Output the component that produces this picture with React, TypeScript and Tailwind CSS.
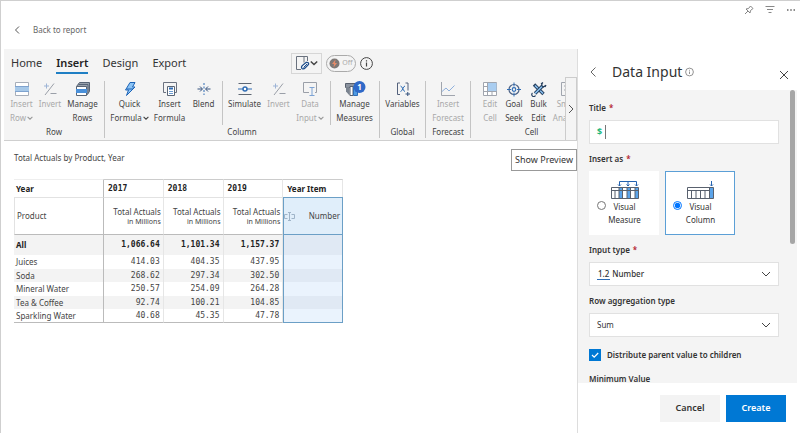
import type { ReactNode } from "react";

const SLATE = "#596575";
const BLUE = "#2f6db5";
const SKY = "#a9cdf0";

const Svg = ({ children, w = 16, h = 16 }: { children: ReactNode; w?: number; h?: number }) => (
  <svg width={w} height={h} viewBox={`0 0 ${w} ${h}`} fill="none" className="shrink-0" aria-hidden="true">
    {children}
  </svg>
);

const Chevron = ({ size = 6, color = "#444" }: { size?: number; color?: string }) => (
  <svg width={size} height={size} viewBox="0 0 10 10" fill="none" className="pointer-events-none inline shrink-0" aria-hidden="true">
    <path d="M1 3l4 4 4-4" stroke={color} strokeWidth={size > 8 ? 1 : 1.8} />
  </svg>
);

const InsertRowIcon = () => (
  <Svg>
    <path d="M1.500 1.500h13v13h-13z" fill="#fff" stroke="#a7aeb9" />
    <path d="M1 5.500h14v5H1z" fill="#a6c8e8" />
    <path d="M1 5.500h14M1 10.500h14" stroke="#7fa3cf" />
  </Svg>
);

const InvertIcon = () => (
  <Svg>
    <path d="M2 5h5M4.500 2.500v5" stroke="#9db4d6" />
    <path d="M3 14L12 2.500M8.500 12.500h6" stroke="#9a9fa8" />
  </Svg>
);

const ManageRowsIcon = () => (
  <Svg>
    <path d="M1.500 5.500l3-4h10v9l-3 4" fill="#9aa2ad" stroke={SLATE} />
    <path d="M3.500 3.500h9.500v9" stroke={SLATE} />
    <path d="M1.500 5.500h10v9h-10z" fill="#fff" stroke={SLATE} />
    <path d="M1 8h11v4H1z" fill="#4a90d9" />
  </Svg>
);

const BoltIcon = () => (
  <Svg>
    <path d="M8 1.500h5L10.500 6H13l-8.500 8.500L6.500 9H3.500z" fill="#8cc4f5" stroke="#1c63b7" strokeLinejoin="round" />
    <path d="M5 8h6" stroke="#1c63b7" />
  </Svg>
);

const InsertFormulaIcon = () => (
  <Svg>
    <path d="M4 11.500H1.500v-10h13v10H13" stroke="#6b7280" />
    <path d="M5.500 5.500h7v9h-7z" fill="#fff" stroke={SLATE} />
    <path d="M7 7.500h4" stroke={BLUE} strokeWidth="2" />
    <path d="M7 10.500h4M7 12.500h4" stroke="#6b9bd1" />
  </Svg>
);

const BlendIcon = () => (
  <Svg>
    <path d="M8 2v12" stroke={BLUE} strokeDasharray="2 1.500" />
    <path d="M1.500 8H6M4 5.500L6.500 8 4 10.500M14.500 8H10M12 5.500L9.500 8l2.500 2.500" stroke="#33507c" />
  </Svg>
);

const SimulateIcon = () => (
  <Svg>
    <path d="M1.500 2.500h13M1.500 13.500h13" stroke="#5d6673" />
    <path d="M1 8h14" stroke={BLUE} />
    <circle cx="8" cy="8" r="2" fill="#fff" stroke={BLUE} strokeWidth="1.500" />
  </Svg>
);

const DataInputIcon = () => (
  <Svg>
    <path d="M7 11.500H1.500v-10h13v10H13" stroke="#9a9fa8" />
    <path d="M7.500 6.500h5M10 6.500v8M7.500 14.500h5" stroke="#7da3d4" />
  </Svg>
);

const MeasuresIcon = () => (
  <svg width="22" height="16" viewBox="0 0 22 16" fill="none" className="shrink-0" aria-hidden="true">
    <path d="M1.500 2.500h12v4h-12z" fill="#8b939f" stroke="#59616e" />
    <path d="M2 6h3.500v8.500l-3.500-4z" fill="#7a838f" />
    <path d="M6 5.500h3v9H6z" fill="#fff" stroke="#59616e" />
    <path d="M9.500 5.500h4v9h-4z" fill="#4f9be3" stroke={BLUE} />
    <circle cx="15.500" cy="6" r="6" fill="#2f69c8" />
    <text x="15.500" y="9" fill="#fff" fontSize="8" fontWeight="700" textAnchor="middle">1</text>
  </svg>
);

const VariablesIcon = () => (
  <Svg>
    <path d="M5 2H2.500v11.500H5M10.500 2H13v7.500" stroke="#53617c" />
    <path d="M5.500 5c2 0 2.500 5.500 4.500 5.500M10 5c-2 0-2.500 5.500-4.500 5.500" stroke={BLUE} />
    <path d="M10.500 13h4.500M12.750 11v4" stroke="#33507c" />
  </Svg>
);

const ForecastIcon = () => (
  <Svg>
    <path d="M1.500 1v13.500H15" stroke="#a0a5ae" />
    <path d="M2 10.500l4-3.500 3 3 5.500-5.500" stroke="#8fb0dc" />
  </Svg>
);

const EditCellIcon = () => (
  <Svg>
    <path d="M1.500 1.500h13v13h-13z" fill="#fff" stroke="#a0a5ae" />
    <path d="M6 2h8.500v8H6z" fill={SKY} />
    <path d="M5.500 1.500v13M1.500 10.500h13M1.500 5.500h4M10 10.500v4" stroke="#a0a5ae" />
  </Svg>
);

const GoalIcon = () => (
  <Svg>
    <circle cx="8" cy="8.500" r="5" stroke="#4c6286" strokeWidth="1.200" />
    <circle cx="8" cy="8.500" r="1.800" stroke={BLUE} strokeWidth="1.200" />
    <path d="M8 1.500v4M8 11.500v4M1 8.500h4M11 8.500h4" stroke={BLUE} />
  </Svg>
);

const BulkIcon = () => (
  <Svg>
    <path d="M3 3.500l9.500 9.500" stroke="#27405f" strokeWidth="3.400" />
    <path d="M4 4.500l8 8" stroke="#8cc4f5" strokeWidth="1.400" />
    <path d="M11.500 5L4 12.500" stroke="#27405f" strokeWidth="3.400" />
    <path d="M11.500 5L4 12.500" stroke="#8cc4f5" strokeWidth="1.400" />
    <path d="M14.500 4.500l-2 1.500-2-1.500 1-3M1.500 12a2 2 0 1 0 3 2.500M10 3l2-1.500M14 6l1-2" stroke="#27405f" strokeWidth="1.200" />
  </Svg>
);

const SmartIcon = () => (
  <Svg>
    <path d="M1.500 1.500h13v13h-13zM4 5h6M4 9h6" stroke="#a0a5ae" />
  </Svg>
);

type Tool = {
  top: string;
  bottom?: string;
  icon: ReactNode;
  width: string;
  disabled?: boolean;
  menu?: boolean;
};

const ToolButton = ({ top, bottom, icon, width, disabled, menu }: Tool) => (
  <button
    type="button"
    disabled={disabled}
    className={`flex shrink-0 flex-col items-center whitespace-nowrap leading-[14px] ${width} ${disabled ? "text-[#a9a9a9]" : "text-[#444]"}`}
  >
    {icon}
    <span>{top}</span>
    {bottom && (
      <span className="flex items-center gap-px">
        {bottom}
        {menu && <Chevron color={disabled ? "#999" : "#444"} />}
      </span>
    )}
  </button>
);

const ToolGroup = ({ label, sections, width }: { label: string; sections: Tool[][]; width: string }) => (
  <div className={`flex shrink-0 flex-col border-r border-[#c4c4c4] ${width}`}>
    <div className="flex h-[45px] justify-center">
      {sections.map((tools, i) => (
        <div key={i} className={`flex px-[3px] ${i > 0 ? "border-l border-[#c4c4c4]" : ""}`}>
          {tools.map((tool) => (
            <ToolButton key={tool.top + tool.bottom} {...tool} />
          ))}
        </div>
      ))}
    </div>
    <div className="text-center leading-[13px] text-[#444]">{label}</div>
  </div>
);

const groups: { label: string; width: string; sections: Tool[][] }[] = [
  {
    label: "Row",
    width: "w-[101px]",
    sections: [
      [
        { top: "Insert", bottom: "Row", icon: <InsertRowIcon />, width: "w-[29px]", disabled: true, menu: true },
        { top: "Invert", icon: <InvertIcon />, width: "w-[28px]", disabled: true },
        { top: "Manage", bottom: "Rows", icon: <ManageRowsIcon />, width: "w-[37px]" },
      ],
    ],
  },
  {
    label: "Column",
    width: "w-[275px]",
    sections: [
      [
        { top: "Quick", bottom: "Formula", icon: <BoltIcon />, width: "w-[42px]", menu: true },
        { top: "Insert", bottom: "Formula", icon: <InsertFormulaIcon />, width: "w-[38px]" },
        { top: "Blend", icon: <BlendIcon />, width: "w-[30px]" },
      ],
      [
        { top: "Simulate", icon: <SimulateIcon />, width: "w-[38px]" },
        { top: "Invert", icon: <InvertIcon />, width: "w-[30px]", disabled: true },
        { top: "Data", bottom: "Input", icon: <DataInputIcon />, width: "w-[33px]", disabled: true, menu: true },
      ],
      [{ top: "Manage", bottom: "Measures", icon: <MeasuresIcon />, width: "w-[42px]" }],
    ],
  },
  {
    label: "Global",
    width: "w-[46px]",
    sections: [[{ top: "Variables", icon: <VariablesIcon />, width: "w-[38px]" }]],
  },
  {
    label: "Forecast",
    width: "w-[45px]",
    sections: [[{ top: "Insert", bottom: "Forecast", icon: <ForecastIcon />, width: "w-[38px]", disabled: true }]],
  },
  {
    label: "Cell",
    width: "w-[122px]",
    sections: [
      [
        { top: "Edit", bottom: "Cell", icon: <EditCellIcon />, width: "w-[24px]", disabled: true },
        { top: "Goal", bottom: "Seek", icon: <GoalIcon />, width: "w-[24px]" },
        { top: "Bulk", bottom: "Edit", icon: <BulkIcon />, width: "w-[25px]" },
        { top: "Smart", bottom: "Analysis", icon: <SmartIcon />, width: "w-[34px]", disabled: true },
      ],
    ],
  },
];

const Ribbon = () => (
  <div className="ml-[3px] border-b border-[#cfcfcf] bg-[#f4f4f4]">
    <div className="flex h-7 items-center pl-[7px] text-[#333]">
      <nav className="flex gap-3.5 text-[11px] leading-[18px]">
        {["Home", "Insert", "Design", "Export"].map((tab) => (
          <a
            key={tab}
            href={`#${tab.toLowerCase()}`}
            className={`border-b-2 pt-0.5 ${tab === "Insert" ? "border-[#1f7fc4] font-semibold text-[#222]" : "border-transparent"}`}
          >
            {tab}
          </a>
        ))}
      </nav>
      <div className="ml-[105px] flex items-center gap-1">
        <button type="button" aria-label="Format" className="flex h-[21px] w-[31px] items-center justify-center border border-[#d6d6d6]">
          <Svg w={15}>
            <path d="M6 14.500H1.500v-13h11V6M9 1.500v6" stroke="#6a727e" />
            <path d="M7 13.500c-1-1-.5-2.500 1-3.500l3-2.500c2-.5 3 .5 2.500 2l-3 3c-1 1.200-2.500 1.700-3.500 1z" fill="#fff" stroke="#1f4e8c" strokeWidth="1.300" />
            <path d="M8.500 12.500l3.500-3.500" stroke="#1f4e8c" />
          </Svg>
          <Chevron size={8} />
        </button>
        <button type="button" role="switch" aria-checked="false" className="flex h-[17px] w-[30px] items-center gap-0.5 rounded-full border border-[#aaa] pl-0.5 text-[7px] text-[#aaa]">
          <Svg w={11} h={11}>
            <circle cx="5.500" cy="5.500" r="5" fill="#7d7876" />
            <path d="M6.500 1.500L3 6h2L4.500 9.500l3.500-4.500H6z" fill="#e58a68" />
          </Svg>
          Off
        </button>
        <button type="button" aria-label="Info">
          <Svg w={13} h={13}>
            <circle cx="6.500" cy="6.500" r="5.900" stroke="#444" />
            <path d="M6.500 5.500v4M6.500 3.200v1.200" stroke="#444" strokeWidth="1.200" />
          </Svg>
        </button>
      </div>
    </div>
    <div className="flex h-[63px] text-[8px]">
      <div className="flex min-w-0 flex-1 overflow-hidden pb-0.5 pt-1">
        {groups.map((group) => (
          <ToolGroup key={group.label} {...group} />
        ))}
      </div>
      <button type="button" aria-label="Scroll right" className="flex w-3 shrink-0 items-center justify-center border border-[#ccc] border-b-0">
        <Svg w={6} h={10}>
          <path d="M1 1l4 4-4 4" stroke="#555" />
        </Svg>
      </button>
    </div>
  </div>
);

const rows = [
  { name: "Juices", values: ["414.03", "404.35", "437.95"] },
  { name: "Soda", values: ["268.62", "297.34", "302.50"] },
  { name: "Mineral Water", values: ["250.57", "254.09", "264.28"] },
  { name: "Tea & Coffee", values: ["92.74", "100.21", "104.85"] },
  { name: "Sparkling Water", values: ["40.68", "45.35", "47.78"] },
];

const years = ["2017", "2018", "2019"];

const mono = "font-['DejaVu_Sans_Mono',monospace]";

const DataTable = () => (
  <table className="w-[329px] table-fixed border-separate border-spacing-0 text-[8px] text-[#444]">
    <colgroup>
      <col className="w-[90px]" />
      <col />
      <col />
      <col />
      <col />
    </colgroup>
    <thead>
      <tr className="h-[18px] text-left font-bold text-[#222]">
        <th className="border-r border-t border-r-[#bbb] border-t-[#eee] pl-0.5">Year</th>
        {years.map((year) => (
          <th key={year} className={`border-r border-t border-[#e6e6e6] border-t-[#ccc] pl-1 ${mono}`}>{year}</th>
        ))}
        <th className="border-r border-t border-[#e6e6e6] border-t-[#ccc] pl-1">Year Item</th>
      </tr>
      <tr className="h-[38px]">
        <th className="border-b border-l border-r border-t border-[#bbb] border-l-[#e2e2e2] border-t-[#e2e2e2] pl-0.5 text-left font-normal">Product</th>
        {years.map((year) => (
          <th key={year} className="border-b border-r border-t border-b-[#bbb] border-r-[#e6e6e6] border-t-[#e2e2e2] pr-0.5 text-right font-normal leading-[11px]">
            Total Actuals
            <div className="text-[7px] leading-[10px]">in Millions</div>
          </th>
        ))}
        <th className="border border-[#6b9fc6] bg-[#e0eefa] font-normal">
          <div className="flex items-center justify-between pr-0.5">
            <Svg w={11} h={11}>
              <path d="M3.500 3.500H.5v4h3M7.500 3.500h3v4h-3M4 1.500h3M5.500 1.500v8M4 9.500h3" stroke="#9fb4c8" />
            </Svg>
            Number
          </div>
        </th>
      </tr>
    </thead>
    <tbody>
      <tr className="h-5 bg-[#f3f3f3] font-bold text-[#222]">
        <td className="border-r border-[#bbb] pl-0.5">All</td>
        {["1,066.64", "1,101.34", "1,157.37"].map((total) => (
          <td key={total} className={`border-r border-[#e6e6e6] pr-[3px] text-right ${mono}`}>{total}</td>
        ))}
        <td className="border-x border-[#6b9fc6] bg-[#e0e9f4]" />
      </tr>
      {rows.map((row, i) => (
        <tr key={row.name} className={`leading-[12px] ${i % 2 ? "h-[13px] bg-[#f3f3f3]" : "h-[14px]"}`}>
          <td className={`border-r border-[#bbb] pl-0.5 ${i === 4 ? "border-b" : ""}`}>{row.name}</td>
          {row.values.map((value) => (
            <td key={value} className={`border-r border-r-[#e6e6e6] border-b-[#bbb] pr-[3px] text-right ${mono} ${i === 4 ? "border-b" : ""}`}>{value}</td>
          ))}
          <td className={`border-x border-[#6b9fc6] ${i % 2 ? "bg-[#e0e9f4]" : "bg-[#eaf3fd]"} ${i === 4 ? "border-b" : ""}`} />
        </tr>
      ))}
    </tbody>
  </table>
);

const FieldLabel = ({ htmlFor, children, required }: { htmlFor?: string; children: string; required?: boolean }) => (
  <label htmlFor={htmlFor} id={htmlFor ? undefined : "insert-as"} className="mb-1.5 block font-semibold leading-3">
    {children}
    {required && <span className="ml-[3px] text-[#b3202c]">*</span>}
  </label>
);

const MeasureDrawing = () => (
  <Svg w={30} h={20}>
    <path d="M9 7.500h3.500v11H9zM17 7.500h3v11h-3zM25 7.500h3.500v11H25z" fill="#5ba4ea" />
    <path d="M1.500 7.500h27v11h-27zM1.500 10.500h27M5 10v8M9 7v11M12.500 7v11M17 7v11M20.500 7v11M25 7v11" stroke="#59616e" />
    <path d="M9.500 6V1.500h17V6M18 1.500V6M8 4.500l1.500 1.500L11 4.500M16.500 4.500L18 6l1.500-1.500M25 4.500L26.500 6 28 4.500" stroke="#2563b0" />
  </Svg>
);

const ColumnDrawing = () => (
  <Svg w={30} h={20}>
    <path d="M23.500 7.500h4v11h-4z" fill="#5ba4ea" />
    <path d="M1.500 7.500h26v11h-26zM1.500 10.500h22M5.500 10v8M10 10v8M14.500 10v8M19 10v8M23.500 7v11" stroke="#59616e" />
    <path d="M25.500 1v5M24 4.500L25.500 6 27 4.500" stroke="#2563b0" />
  </Svg>
);

const InsertCard = ({ kind, drawing, checked }: { kind: string; drawing: ReactNode; checked?: boolean }) => (
  <label className={`flex h-16 w-[70px] items-center border bg-white pl-[7px] ${checked ? "border-[#5b9fd6]" : "border-white"}`}>
    <input type="radio" name="insert-as" defaultChecked={checked} className="mt-1 h-[9px] w-[9px] shrink-0 accent-[#0075ff]" />
    <span className="flex flex-1 flex-col items-center pr-[15px] text-center leading-[13px]">
      {drawing}
      Visual
      <br />
      {kind}
    </span>
  </label>
);

const fieldBox = "flex h-6 items-center border border-[#e1e1e1] bg-white px-[7px]";

const InputPanel = () => (
  <aside className="flex w-[223px] shrink-0 flex-col border-l border-[#ddd] bg-white text-[8px] text-[#333]">
    <div className="flex h-[41px] shrink-0 items-center pl-3 pr-[11px] pt-1">
      <button type="button" aria-label="Back">
        <Svg w={6} h={12}>
          <path d="M5.500 1.500L1 6l4.500 4.500" stroke="#666" />
        </Svg>
      </button>
      <h2 className="ml-4 text-[14px] leading-5">Data Input</h2>
      <Svg w={12} h={12}>
        <circle cx="7.500" cy="6" r="3.900" stroke="#777" strokeWidth="0.800" />
        <path d="M7.500 5.500V8M7.500 3.800v.9" stroke="#777" strokeWidth="0.800" />
      </Svg>
      <button type="button" aria-label="Close" className="ml-auto mt-1.5">
        <Svg w={10} h={10}>
          <path d="M1 1l8 8M9 1L1 9" stroke="#444" />
        </Svg>
      </button>
    </div>

    <div className="mr-[3px] flex min-h-0 flex-1 bg-[#f4f4f4]">
      <form className="flex min-w-0 flex-1 flex-col gap-[9px] overflow-hidden pl-[11px] pr-[11px] pt-3">
        <div>
          <FieldLabel htmlFor="title" required>Title</FieldLabel>
          <div className={fieldBox}>
            <span className="text-[9px] font-bold text-[#1fb87a]">$</span>
            <span className="ml-[3px] h-3.5 w-px bg-[#777]" />
            <input id="title" type="text" className="min-w-0 flex-1 outline-none" />
          </div>
        </div>
        <div role="radiogroup" aria-labelledby="insert-as">
          <FieldLabel required>Insert as</FieldLabel>
          <div className="flex gap-1.5">
            <InsertCard kind="Measure" drawing={<MeasureDrawing />} />
            <InsertCard kind="Column" drawing={<ColumnDrawing />} checked />
          </div>
        </div>
        <div>
          <FieldLabel htmlFor="input-type" required>Input type</FieldLabel>
          <div className={fieldBox}>
            <span className="mr-0.5 border-b border-[#2f6db5] px-px font-medium leading-[11px]">1.2</span>
            <select id="input-type" className="min-w-0 flex-1 appearance-none font-medium outline-none">
              <option>Number</option>
            </select>
            <Chevron size={10} />
          </div>
        </div>
        <div>
          <FieldLabel htmlFor="aggregation">Row aggregation type</FieldLabel>
          <div className={fieldBox}>
            <select id="aggregation" className="min-w-0 flex-1 appearance-none outline-none">
              <option>Sum</option>
            </select>
            <Chevron size={10} />
          </div>
        </div>
        <label className="flex shrink-0 items-center gap-1.5 py-[3px] font-semibold leading-3">
          <span className="grid place-items-center">
            <input type="checkbox" defaultChecked className="peer col-start-1 row-start-1 h-3 w-3 appearance-none border border-[#0078d4] bg-white checked:bg-[#0078d4]" />
            <svg width="8" height="8" viewBox="0 0 8 8" fill="none" className="pointer-events-none col-start-1 row-start-1 opacity-0 peer-checked:opacity-100" aria-hidden="true">
              <path d="M1 4l2.200 2.200L7.200 2" stroke="#fff" strokeWidth="1.200" />
            </svg>
          </span>
          Distribute parent value to children
        </label>
        <div className="font-semibold leading-3">Minimum Value</div>
      </form>
      <div className="mr-0.5 h-[154px] w-[5px] shrink-0 rounded-full bg-[#a6a6a6]" />
    </div>

    <div className="flex h-[50px] shrink-0 items-center justify-end gap-1.5 pr-3.5 text-[9px] font-semibold">
      <button type="button" className="h-[27px] w-[60px] bg-[#f3f3f3]">Cancel</button>
      <button type="button" className="h-[27px] w-[60px] bg-[#0078d4] text-white">Create</button>
    </div>
  </aside>
);

const App = () => {
  return (
    <div className="flex h-screen flex-col border-l border-t border-[#cfcfcf] bg-white font-['Noto_Sans',sans-serif] text-[8px] text-[#444]">
      <header className="flex h-12 shrink-0 items-start justify-between pr-1">
        <a href="#report" className="ml-[13px] mt-[23px] flex items-center gap-[13px] leading-3 text-[#666]">
          <Svg w={6} h={10}>
            <path d="M5 1.500L1.500 5 5 8.500" stroke="#555" />
          </Svg>
          Back to report
        </a>
        <div className="mt-1 flex gap-[11px]">
          <button type="button" aria-label="Pin">
            <Svg w={10} h={10}>
              <path d="M6.500 1L9 3.500l-2.500 2L6 8 2 4l2.500-.5zM4 6L1 9" stroke="#777" strokeWidth="0.900" />
            </Svg>
          </button>
          <button type="button" aria-label="Filters">
            <Svg w={10} h={10}>
              <path d="M.5 1.500h9M2 4.500h6M3.500 7.500h3" stroke="#888" />
            </Svg>
          </button>
          <button type="button" aria-label="More options">
            <Svg w={10} h={10}>
              <path d="M1 5h1.500M4.250 5h1.500M7.500 5H9" stroke="#666" strokeWidth="1.300" />
            </Svg>
          </button>
        </div>
      </header>

      <div className="flex min-h-0 flex-1">
        <main className="min-w-0 flex-1">
          <Ribbon />
          <div className="mt-2 flex items-start justify-between pl-[13px]">
            <h1 className="mt-[3px] leading-3">Total Actuals by Product, Year</h1>
            <button type="button" className="h-[22px] border border-[#999] px-[3px] text-[9px] text-[#333]">
              Show Preview
            </button>
          </div>
          <div className="ml-[13px] mt-2">
            <DataTable />
          </div>
        </main>
        <InputPanel />
      </div>
    </div>
  );
};

export default App;
